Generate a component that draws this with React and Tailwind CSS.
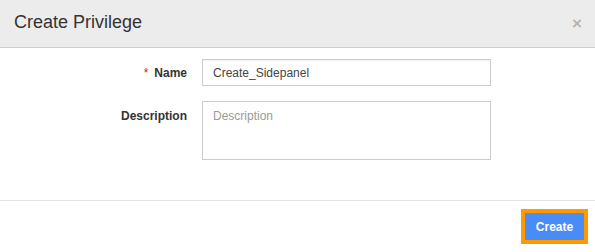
// Create Privilege — modal dialog

export default function App() {
  return (
    <div
      className="w-[595px] h-[252px] bg-white flex flex-col text-[#333]"
      style={{ fontFamily: '"Liberation Sans", Arial, Helvetica, sans-serif' }}
    >
      {/* Header */}
      <div className="h-[48px] shrink-0 bg-[#ececec] border-b border-[#cfcfcf] flex items-center justify-between pl-[14px] pr-[13px]">
        <h4 className="text-[18px] leading-none text-[#333] mt-[-3px]">Create Privilege</h4>
        <span className="text-[17px] font-bold text-[#b5b5b5] leading-none mt-[-1px]">×</span>
      </div>

      {/* Body */}
      <div className="h-[153px] shrink-0 border-b border-[#e5e5e5] pt-[11px] flex flex-col gap-[15px]">
        <div className="flex items-center">
          <label className="w-[187px] text-right text-[12px] font-bold">
            <span className="text-[#e02020] font-normal mr-[6px]">*</span>Name
          </label>
          <input
            readOnly
            value="Create_Sidepanel"
            className="ml-[15px] w-[289px] h-[27px] border border-[#ccc] px-[10px] text-[12px] text-[#444] outline-none shadow-[inset_0_1px_1px_rgba(0,0,0,0.05)]"
          />
        </div>
        <div className="flex items-start">
          <label className="w-[187px] text-right text-[12px] font-bold pt-[6px]">Description</label>
          <textarea
            readOnly
            placeholder="Description"
            className="ml-[15px] w-[289px] h-[59px] border border-[#ccc] px-[10px] py-[5px] text-[12px] text-[#444] placeholder:text-[#9a9a9a] resize-none outline-none"
          />
        </div>
      </div>

      {/* Footer */}
      <div className="flex-1 flex items-start justify-end pr-[7px] pt-[8px]">
        <button className="w-[67px] h-[35px] border-[4px] border-[#ff9900] bg-[#4a8cf7] text-white text-[12px] font-bold">
          Create
        </button>
      </div>
    </div>
  );
}
